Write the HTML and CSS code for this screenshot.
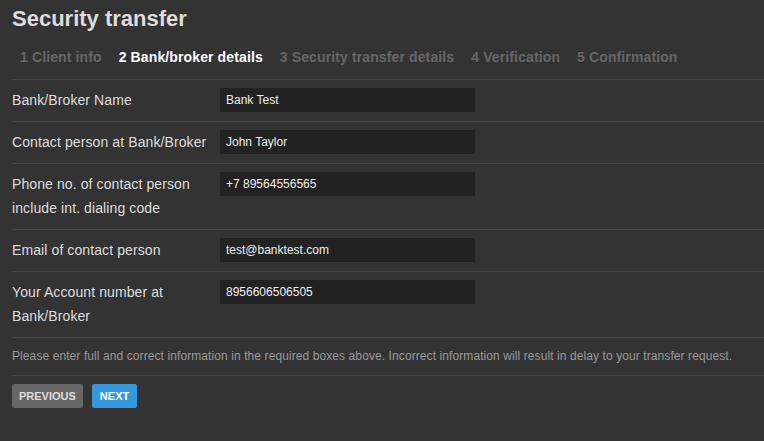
FILE: index.html
```html
<!DOCTYPE html>
<html lang="en">
<head>
    <meta charset="UTF-8">
    <meta name="viewport" content="width=device-width, initial-scale=1.0">
    <title>Security transfer</title>
    <link rel="stylesheet" href="styles.css">
</head>
<body>

<div class="container">
    <h1>Security transfer</h1>

    <ul class="steps">
        <li>1 Client info</li>
        <li class="active">2 Bank/broker details</li>
        <li>3 Security transfer details</li>
        <li>4 Verification</li>
        <li>5 Confirmation</li>
    </ul>

    <div class="row">
        <label for="bank">Bank/Broker Name</label>
        <input type="text" id="bank" value="Bank Test">
    </div>
    <div class="row">
        <label for="contact">Contact person at Bank/Broker</label>
        <input type="text" id="contact" value="John Taylor">
    </div>
    <div class="row">
        <label for="phone">Phone no. of contact person include int. dialing code</label>
        <input type="text" id="phone" value="+7 89564556565">
    </div>
    <div class="row">
        <label for="email">Email of contact person</label>
        <input type="text" id="email" value="test@banktest.com">
    </div>
    <div class="row">
        <label for="account">Your Account number at Bank/Broker</label>
        <input type="text" id="account" value="8956606506505">
    </div>

    <p class="notice">Please enter full and correct information in the required boxes above. Incorrect information will result in delay to your transfer request.</p>

    <div class="buttons">
        <button class="btn prev">Previous</button>
        <button class="btn next">Next</button>
    </div>
</div>

</body>
</html>
```

FILE: styles.css
```css
body {
    margin: 0;
    font-family: "Liberation Sans", Arial, sans-serif;
    background-color: #333333;
    color: #dddddd;
}
.container {
    padding-left: 12px;
}
h1 {
    margin: 6px 0 0;
    font-size: 22px;
    line-height: 25px;
    color: #dddddd;
}
.steps {
    display: flex;
    list-style: none;
    margin: 0;
    padding: 16px 0 12px;
    border-bottom: 1px solid #454545;
}
.steps li {
    padding: 0 8px;
    font-size: 14px;
    font-weight: bold;
    line-height: 20px;
    letter-spacing: 0.12px;
    color: #666666;
    margin-right: 1px;
}
.steps li.active {
    color: #ffffff;
}
.row {
    display: flex;
    align-items: flex-start;
    padding: 8px 0 9px;
    border-bottom: 1px solid #454545;
}
.row label {
    width: 208px;
    font-size: 14px;
    line-height: 24px;
    letter-spacing: 0.1px;
    color: #dddddd;
}
.row input {
    width: 255px;
    height: 24px;
    box-sizing: border-box;
    padding: 0 6px;
    border: none;
    background-color: #222222;
    color: #eeeeee;
    font-family: "Liberation Sans", Arial, sans-serif;
    font-size: 12px;
    outline: none;
}
.notice {
    margin: 0;
    padding: 10px 0;
    font-size: 12px;
    line-height: 17px;
    letter-spacing: 0.09px;
    color: #999999;
    border-bottom: 1px solid #454545;
}
.buttons {
    display: flex;
    gap: 9px;
    margin-top: 8px;
}
.btn {
    height: 24px;
    padding: 0 8px;
    border: none;
    border-radius: 2px;
    font-family: "Liberation Sans", Arial, sans-serif;
    font-size: 11px;
    font-weight: bold;
    text-transform: uppercase;
    cursor: pointer;
}
.prev {
    padding: 0 7px;
    background-color: #666666;
    color: #dddddd;
}
.next {
    background-color: #3498db;
    color: #ffffff;
}
```
